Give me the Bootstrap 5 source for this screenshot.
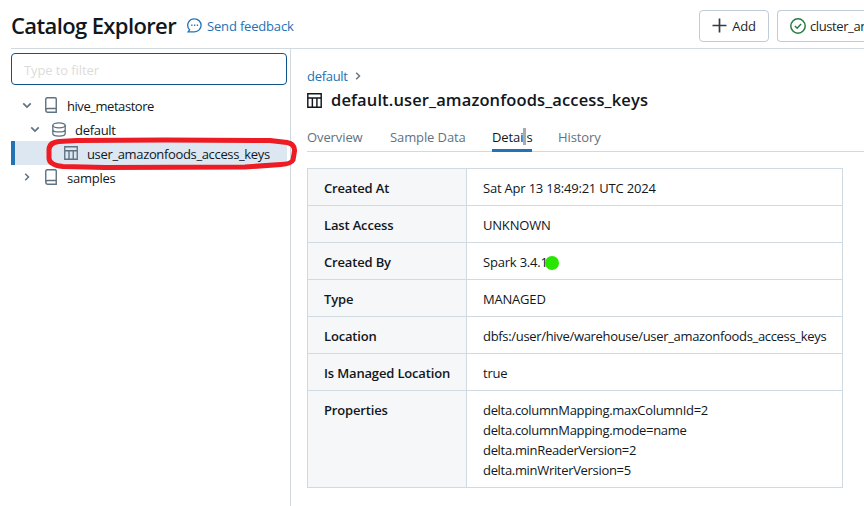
<!DOCTYPE html>
<html lang="en">
<head>
<meta charset="utf-8">
<meta name="viewport" content="width=device-width, initial-scale=1">
<title>Catalog Explorer</title>
<link href="https://cdn.jsdelivr.net/npm/bootstrap@5.3.0/dist/css/bootstrap.min.css" rel="stylesheet">
<style>
:root{--line:#d1d9e1;--blue:#2272b4;--ink:#11171c;--muted:#5f7281}
body{font-family:"Open Sans","Noto Sans",sans-serif;font-size:13px;line-height:20px;letter-spacing:-.1px;color:var(--ink);height:506px;overflow:hidden}
svg{display:block;flex:none}
.topbar{height:49px;margin-left:11px;border-bottom:1px solid var(--line);padding-top:3px}
.page-title{font-size:22px;line-height:28px;font-weight:600;letter-spacing:-.62px;position:relative;top:-1px}
.feedback{color:var(--blue);margin-left:11px;gap:5px;letter-spacing:-.18px}
.bar-btn{height:32px;border:1px solid #c0cdd8;border-radius:4px;font-size:13px;line-height:20px;padding:0;letter-spacing:-.2px}
.add-btn{width:70px;margin-left:auto;margin-right:8px}
.add-btn span{padding-left:1px}
.cluster-btn{width:87px;border-right:0;border-radius:4px 0 0 4px;padding-left:12px;letter-spacing:-.4px}
.workspace{height:457px}
.sidebar{width:291px;border-right:1px solid var(--line);padding:4px 3px 0 11px}
.filter-box{height:32px;border:1px solid #0e538b;border-radius:4px;padding:1px 12px 0;font-size:13px;letter-spacing:-.1px}
.filter-box::placeholder{color:#dcdcdc;opacity:1}
.tree{margin-top:8px}
.tree-row{height:24px;color:var(--muted);position:relative}
.tree-row .label{color:var(--ink);padding-top:2px}
.t1{letter-spacing:-.45px}.t2{letter-spacing:-.3px}.t3{letter-spacing:-.35px}.t4{letter-spacing:-.25px}
.lvl-0{padding-left:11px}.lvl-1{padding-left:19px}
.tree-row .chev{margin-right:12px}
.tree-row .kind{margin-right:9px}
.picked{background:#dce7f2;border-left:4px solid var(--blue);padding-left:49px}
.ring{position:absolute;left:30px;top:-5px;z-index:2}
.main{padding:17px 0 0 16px}
.crumb{color:var(--blue);gap:7px;letter-spacing:-.3px}
.obj-title{font-size:16.5px;line-height:24px;font-weight:600;gap:9px;margin-top:2px;letter-spacing:.12px}
.tabs{height:31px;border-bottom:1px solid var(--line);padding-top:6px;margin-top:9px}
.tabs .tab{color:var(--muted);font-weight:500;margin-right:26px;height:25px;white-space:nowrap}
.tabs .tab.on{color:var(--ink);border-bottom:3px solid var(--blue);position:relative}
.caret{position:absolute;left:31px;top:1px;width:3px;height:17px;background:#aaa}
.props{width:536px;margin:16px 0 0;border:1px solid var(--line);table-layout:fixed;border-collapse:collapse}
.props th,.props td{border:1px solid var(--line);padding:9px 16px 7px;line-height:20px;vertical-align:top}
.props th{width:159px;background:#f6f7f9;font-weight:600;white-space:nowrap;letter-spacing:-.16px}
.props td{letter-spacing:-.2px}
.props .tight{letter-spacing:-.32px}
.dot{position:absolute;width:14px;height:14px;border-radius:50%;background:#28e600;left:62px;top:4px}
.w-ov{width:57px}.w-sd{width:76px}.w-de{width:40px}.w-hi{width:46px}
</style>
<script src="https://cdn.jsdelivr.net/npm/bootstrap@5.3.0/dist/js/bootstrap.bundle.min.js"></script>
</head>
<body class="bg-white">
<svg width="0" height="0" class="position-absolute">
  <defs>
    <symbol id="table" viewBox="0 0 14 14"><path d="M.75 .75h12.5v12.5H.75zM.75 4.700h12.5M5 4.700v8.550M9.250 4.700v8.550" fill="none" stroke="currentColor" stroke-width="1.350"/></symbol>
    <symbol id="book" viewBox="0 0 12 16"><path d="M11.250 11.300V2Q11.250.75 10 .75H2.250Q.75.75.75 2.250V13q0 2.200 2.200 2.200h8.300v-3.700H2.800Q.75 11.500.75 13.300" fill="none" stroke="currentColor" stroke-width="1.400"/></symbol>
    <symbol id="down" viewBox="0 0 8 6"><path d="M.8 1.200 4 4.300 7.200 1.200" fill="none" stroke="currentColor" stroke-width="1.500"/></symbol>
    <symbol id="right" viewBox="0 0 6 8"><path d="M1.200.8 4.500 4 1.200 7.200" fill="none" stroke="currentColor" stroke-width="1.500"/></symbol>
  </defs>
</svg>

<header class="topbar d-flex align-items-center">
  <h1 class="page-title mb-0">Catalog Explorer</h1>
  <a class="feedback d-flex align-items-center text-decoration-none" href="#">
    <svg width="15" height="15" viewBox="0 0 15 15" fill="none" stroke="currentColor" stroke-width="1.300"><path d="M7.600.8a6.500 6.500 0 1 1 0 13H1.100L2.600 11.800A6.500 6.500 0 0 1 7.600.8Z"/><path d="M4.200 7.300h1.300M7 7.300h1.300M9.800 7.300h1.300" stroke-width="1.400"/></svg>
    <span>Send feedback</span>
  </a>
  <button class="btn bar-btn add-btn d-flex align-items-center justify-content-center gap-1">
    <svg width="15" height="15" viewBox="0 0 15 15"><path d="M7.500.5v14M.5 7.500h14" stroke="#333b42" stroke-width="1.700"/></svg><span>Add</span>
  </button>
  <button class="btn bar-btn cluster-btn d-flex align-items-center gap-1 overflow-hidden text-nowrap">
    <svg width="16" height="16" viewBox="0 0 16 16" fill="none" stroke="#277c43" stroke-width="1.500"><circle cx="8" cy="8" r="7.200"/><path d="m4.900 8 2.200 2.200 4-4.200"/></svg><span>cluster_an</span>
  </button>
</header>

<div class="workspace d-flex">
  <aside class="sidebar flex-shrink-0">
    <input class="form-control filter-box shadow-none" placeholder="Type to filter" aria-label="Filter">
    <div class="tree">
      <div class="tree-row lvl-0 d-flex align-items-center"><svg class="chev" width="10" height="7"><use href="#down"/></svg><svg class="kind" width="14" height="16"><use href="#book"/></svg><span class="label t1">hive_metastore</span></div>
      <div class="tree-row lvl-1 d-flex align-items-center"><svg class="chev" width="10" height="7"><use href="#down"/></svg><svg class="kind" width="14" height="15" viewBox="0 0 14 15" fill="none" stroke="currentColor" stroke-width="1.300"><ellipse cx="7" cy="3.300" rx="6.200" ry="2.500"/><path d="M.8 3.300v8.200c0 3.500 12.400 3.500 12.400 0V3.300M.8 7.400c0 3.400 12.400 3.400 12.400 0"/></svg><span class="label t2">default</span></div>
      <div class="tree-row picked d-flex align-items-center"><svg class="kind" width="14" height="14"><use href="#table"/></svg><span class="label t3">user_amazonfoods_access_keys</span>
        <svg class="ring" width="254" height="36" viewBox="0 0 254 36"><path d="M14 5.500 32 4.500 120 4 225 4.500 242 6.500Q250 8 249.500 15L248 24Q246 28 236 28.500L200 31 60 31.500 18 30.500Q4 29 4 22V14Q4 6.500 14 5.500Z" fill="none" stroke="#ed1c24" stroke-width="5" stroke-linejoin="round"/></svg>
      </div>
      <div class="tree-row lvl-0 d-flex align-items-center"><svg class="chev" width="10" height="8"><use href="#right"/></svg><svg class="kind" width="14" height="16"><use href="#book"/></svg><span class="label t4">samples</span></div>
    </div>
  </aside>

  <main class="main flex-grow-1">
    <nav class="crumb d-flex align-items-center"><span>default</span><svg width="6" height="8" class="text-secondary"><use href="#right"/></svg></nav>
    <h2 class="obj-title d-flex align-items-center mb-0"><svg width="15" height="15"><use href="#table"/></svg><span>default.user_amazonfoods_access_keys</span></h2>
    <div class="tabs d-flex">
      <div class="tab w-ov">Overview</div><div class="tab w-sd">Sample Data</div><div class="tab on w-de">Details<i class="caret"></i></div><div class="tab w-hi">History</div>
    </div>
    <table class="props">
      <tr><th>Created At</th><td>Sat Apr 13 18:49:21 UTC 2024</td></tr>
      <tr><th>Last Access</th><td>UNKNOWN</td></tr>
      <tr><th>Created By</th><td><div class="position-relative">Spark 3.4.1<i class="dot"></i></div></td></tr>
      <tr><th>Type</th><td>MANAGED</td></tr>
      <tr><th>Location</th><td class="text-nowrap tight">dbfs:/user/hive/warehouse/user_amazonfoods_access_keys</td></tr>
      <tr><th>Is Managed Location</th><td>true</td></tr>
      <tr><th>Properties</th><td class="tight">delta.columnMapping.maxColumnId=2<br>delta.columnMapping.mode=name<br>delta.minReaderVersion=2<br>delta.minWriterVersion=5</td></tr>
    </table>
  </main>
</div>
</body>
</html>
